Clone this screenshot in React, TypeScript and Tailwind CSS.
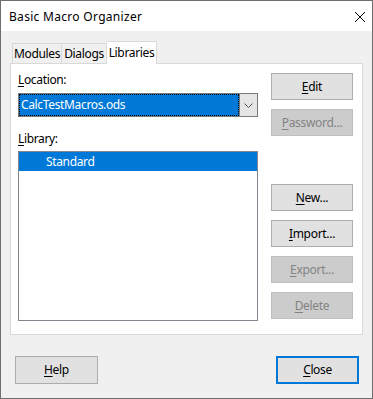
import React from "react";

const font = { fontFamily: '"Noto Sans", "Open Sans", sans-serif' };

function U({ c }: { c: string }) {
  return <span className="underline underline-offset-[2px] decoration-1">{c}</span>;
}

function Btn({ k, rest, disabled, className = "" }: { k: string; rest: string; disabled?: boolean; className?: string }) {
  return (
    <div
      className={
        "h-[27px] w-[82px] flex items-center justify-center text-[12px] tracking-[-0.3px] leading-none border " +
        (disabled ? "bg-[#cccccc] border-[#bfbfbf] text-[#838383] " : "bg-[#e1e1e1] border-[#adadad] text-black ") +
        className
      }
    >
      <span>
        <U c={k} />
        {rest}
      </span>
    </div>
  );
}

export default function App() {
  return (
    <div style={font} className="w-[373px] h-[399px] border border-[#6e6e6e] bg-[#f0f0f0] flex flex-col text-black">
      <div className="h-[30px] bg-white flex items-center justify-between pl-[8px] pr-[6px] pt-[2px]">
        <span className="text-[12px] tracking-[0.3px] text-black">Basic Macro Organizer</span>
        <svg width="12" height="12" viewBox="0 0 12 12">
          <path d="M1 1 L11 11 M11 1 L1 11" stroke="#000" strokeWidth="1" />
        </svg>
      </div>
      <div className="flex flex-col pl-[9px] pr-[9px] pt-[10px] text-[12px] tracking-[-0.35px]">
        <div className="flex items-end h-[22px] pl-[2px]">
          <div className="h-[20px] w-[50px] border border-b-0 border-[#d9d9d9] bg-[#f0f0f0] flex items-center justify-center">Modules</div>
          <div className="h-[20px] w-[45px] border border-b-0 border-l-0 border-[#d9d9d9] bg-[#f0f0f0] flex items-center justify-center">Dialogs</div>
          <div className="h-[23px] -mb-[1px] w-[50px] border border-b-0 border-l-0 border-[#d9d9d9] bg-white flex items-center justify-center relative z-10">Libraries</div>
        </div>
        <div className="bg-white border border-[#d9d9d9] h-[272px] flex pl-[7px] pr-[7px] pt-[8px]">
          <div className="w-[240px] flex flex-col">
            <div className="h-[16px] leading-[16px]"><U c="L" />ocation:</div>
            <div className="mt-[5px] h-[24px] border border-[#7a7a7a] flex">
              <div className="flex-1 bg-[#0078d7]">
                <div className="h-full border border-dotted border-black flex items-center pl-[1px] text-white">
                  CalcTestMacros.ods
                </div>
              </div>
              <div className="w-[18px] border-l border-[#7a7a7a] bg-[#e5e5e5] flex items-center justify-center">
                <svg width="9" height="5" viewBox="0 0 9 5">
                  <path d="M0.5 0.5 L4.5 4.5 L8.5 0.5" stroke="#555" fill="none" strokeWidth="1" />
                </svg>
              </div>
            </div>
            <div className="mt-[14px] h-[16px] leading-[16px]"><U c="L" />ibrary:</div>
            <div className="mt-[4px] h-[170px] border border-[#828790] bg-white">
              <div className="h-[19px] bg-[#0078d7] text-white flex items-center pl-[27px]">Standard</div>
            </div>
          </div>
          <div className="ml-[13px] flex flex-col pt-[1px]">
            <Btn k="E" rest="dit" />
            <Btn k="P" rest="assword..." disabled className="mt-[9px]" />
            <Btn k="N" rest="ew..." className="mt-[48px]" />
            <Btn k="I" rest="mport..." className="mt-[9px]" />
            <Btn k="E" rest="xport..." disabled className="mt-[9px]" />
            <Btn k="D" rest="elete" disabled className="mt-[9px]" />
          </div>
        </div>
        <div className="flex justify-between mt-[21px] pl-[5px] pr-[4px]">
          <Btn k="H" rest="elp" className="w-[83px] h-[28px]" />
          <div className="h-[28px] w-[83px] border-2 border-[#0078d7] bg-[#e1e1e1] flex items-center justify-center">
            <span><U c="C" />lose</span>
          </div>
        </div>
      </div>
    </div>
  );
}
